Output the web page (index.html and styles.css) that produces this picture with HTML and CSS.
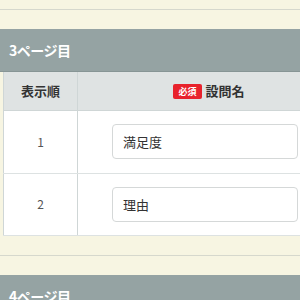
FILE: index.html
```html
<!DOCTYPE html>
<html>
<head>
    <meta charset="UTF-8">
    <title>設問一覧</title>
    <link rel="stylesheet" href="styles.css">
</head>
<body>

<div class="page">

    <div class="sep"></div>

    <div class="section">
        <h2 class="section-head">3ページ目</h2>
        <table class="qtable">
            <tr>
                <th class="col-no">表示順</th>
                <th class="col-name"><span class="badge">必須</span>設問名</th>
            </tr>
            <tr>
                <td class="col-no">1</td>
                <td class="col-name"><input class="field" type="text" value="満足度"></td>
            </tr>
            <tr>
                <td class="col-no">2</td>
                <td class="col-name"><input class="field" type="text" value="理由"></td>
            </tr>
        </table>
    </div>

    <div class="sep"></div>

    <div class="section">
        <h2 class="section-head">4ページ目</h2>
    </div>

</div>

</body>
</html>
```
FILE: styles.css
```css
* {
    margin: 0;
    padding: 0;
    box-sizing: border-box;
}

html, body {
    overflow: hidden;
}

body {
    font: 12px/1.5 "Noto Sans CJK JP", "Noto Sans", sans-serif;
    background: #f7f5e2;
    color: #333;
}

.page {
    width: 340px;
    padding-top: 9px;
}

.sep {
    height: 1px;
    background: #d6d8cd;
    margin-bottom: 19px;
}

.section {
    margin-bottom: 19px;
}

.section-head {
    height: 43px;
    line-height: 42px;
    padding-left: 9px;
    background: #95a3a3;
    border-bottom: 1px solid #879595;
    color: #fff;
    font-size: 14px;
    font-weight: bold;
    letter-spacing: -0.5px;
}

.qtable {
    margin-left: 3px;
    width: 337px;
    border-collapse: collapse;
    border-left: 1px solid #cfd6d6;
    border-bottom: 1px solid #a9b3b3;
}

.qtable th {
    height: 38px;
    background: #dfe3e3;
    border-bottom: 1px solid #cfd6d6;
    font-size: 13px;
    font-weight: bold;
    color: #333;
    text-align: center;
}

.qtable td {
    height: 63px;
    background: #fff;
    border-bottom: 1px solid #dde2e2;
    font-size: 12px;
    color: #555;
    text-align: center;
}

.qtable tr:last-child td {
    height: 62px;
}

.qtable .col-no {
    width: 74px;
    border-right: 1px solid #cfd6d6;
}

.qtable td.col-name {
    text-align: left;
    padding: 0 0 0 34px;
}

.badge {
    display: inline-block;
    margin-right: 4px;
    padding: 0 5px;
    height: 15px;
    line-height: 15px;
    border-radius: 2px;
    background: #e8222c;
    color: #fff;
    font-size: 9px;
    vertical-align: 1px;
}

.field {
    display: block;
    width: 186px;
    height: 35px;
    padding: 0 10px;
    border: 1px solid #d5d8d8;
    border-radius: 4px;
    background: #fff;
    font: 13px "Noto Sans CJK JP", "Noto Sans", sans-serif;
    color: #333;
}
```
